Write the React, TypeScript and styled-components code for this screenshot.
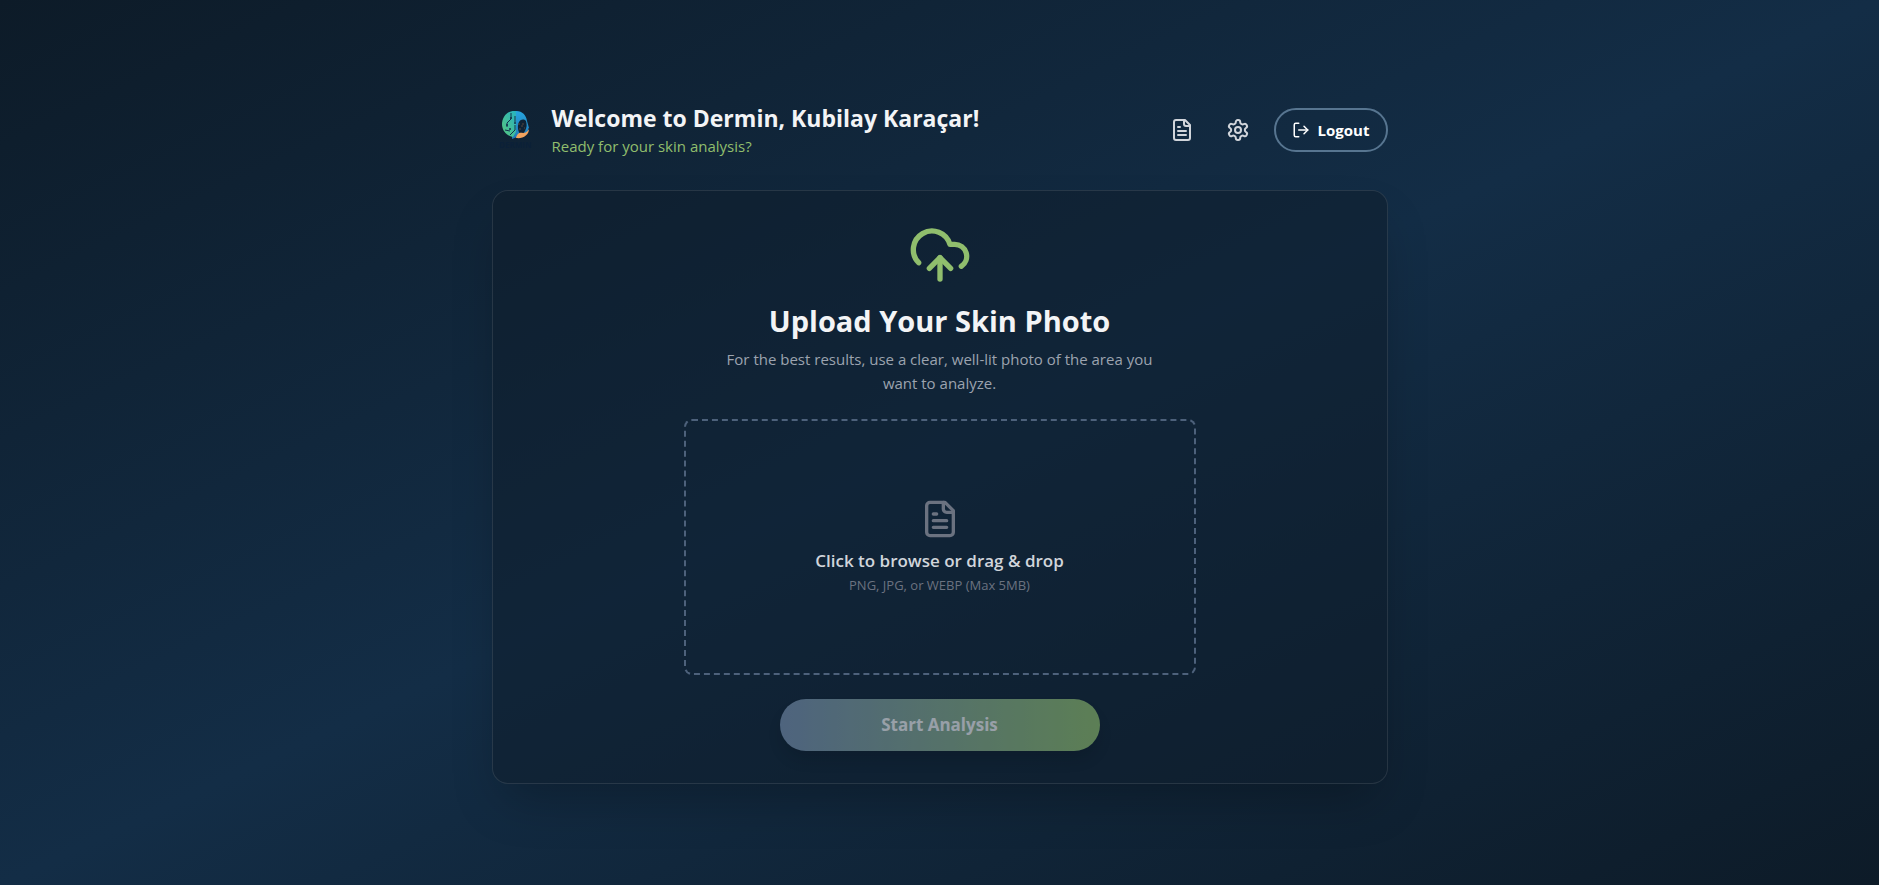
import React from "react";
import styled, { createGlobalStyle } from "styled-components";
import { CloudUpload, LogOut } from "lucide-react";

const GlobalStyle = createGlobalStyle`
  *, *::before, *::after { box-sizing: border-box; }
  body { margin: 0; font-family: "Segoe UI", "Open Sans", "Noto Sans", sans-serif; color: #f3f4f6; background: #0d1b2a; }
  h1, h2, p { margin: 0; }
  button { font: inherit; color: inherit; border: 0; background: none; cursor: pointer; }
`;

const Page = styled.div`
  min-height: 100vh;
  display: flex;
  flex-direction: column;
  align-items: center;
  justify-content: center;
  padding: 24px;
  background: linear-gradient(to bottom right, #0d1b28, #132d46, #0d1b28);
`;

const Shell = styled.div`
  width: 100%;
  max-width: 896px;
  display: flex;
  flex-direction: column;
  gap: 32px;
`;

const Header = styled.header`
  display: flex;
  align-items: center;
  justify-content: space-between;
`;

const Brand = styled.div`
  display: flex;
  align-items: center;
  gap: 12px;
`;

const Logo = styled.svg`
  width: 48px;
  height: 48px;
  flex: none;
`;

const Wordmark = styled.text`
  font: 700 8px "Open Sans", sans-serif;
  fill: #0b2038;
`;

const Greeting = styled.h1`
  font-size: 23px;
  line-height: 32px;
  font-weight: 700;
`;

const Tagline = styled.p`
  font-size: 15px;
  line-height: 24px;
  color: #90be6d;
`;

const Actions = styled.nav`
  display: flex;
  align-items: center;
  gap: 16px;
`;

const IconButton = styled.button`
  display: flex;
  padding: 8px;
  border-radius: 50%;
  color: #d1d5db;
`;

const LogoutButton = styled.button`
  display: flex;
  align-items: center;
  gap: 8px;
  height: 44px;
  padding: 0 16px;
  border: 2px solid #577590;
  border-radius: 22px;
  font-size: 15px;
  font-weight: 700;
  color: #ffffff;
`;

const Card = styled.main`
  display: flex;
  flex-direction: column;
  align-items: center;
  padding: 32px;
  border: 1px solid rgba(255, 255, 255, 0.1);
  border-radius: 16px;
  background: rgba(13, 27, 42, 0.5);
  box-shadow: 0 25px 50px -12px rgba(0, 0, 0, 0.25);
`;

const Title = styled.h2`
  margin-top: 16px;
  font-size: 29px;
  line-height: 36px;
  font-weight: 700;
`;

const Hint = styled.p`
  max-width: 448px;
  margin-top: 8px;
  font-size: 15px;
  line-height: 24px;
  text-align: center;
  color: #9ca3af;
`;

const DropZone = styled.label`
  display: flex;
  flex-direction: column;
  align-items: center;
  justify-content: center;
  width: 100%;
  max-width: 512px;
  height: 256px;
  margin-top: 24px;
  border: 2px dashed #4d617b;
  border-radius: 8px;
  cursor: pointer;
  color: #6b7280;
`;

const FileInput = styled.input`
  position: absolute;
  width: 1px;
  height: 1px;
  opacity: 0;
`;

const DropTitle = styled.span`
  margin-top: 8px;
  font-size: 17px;
  line-height: 28px;
  font-weight: 600;
  color: #d1d5db;
`;

const DropNote = styled.span`
  font-size: 13px;
  line-height: 20px;
`;

const StartButton = styled.button`
  width: 100%;
  max-width: 320px;
  height: 52px;
  margin-top: 24px;
  border-radius: 26px;
  font-size: 17px;
  font-weight: 700;
  color: #f3f4f6;
  background: linear-gradient(to right, #7890b0, #90be6d);
  box-shadow: 0 10px 15px -3px rgba(0, 0, 0, 0.2);
  opacity: 0.6;
`;

const DocumentIcon = ({ size }: { size: number }) => (
  <svg width={size} height={size} viewBox="0 0 24 24" fill="none" stroke="currentColor" strokeWidth="2" strokeLinecap="round" strokeLinejoin="round" aria-hidden="true">
    <path d="M15 2H6a2 2 0 0 0-2 2v16a2 2 0 0 0 2 2h12a2 2 0 0 0 2-2V7z" />
    <path d="M14 2v4a2 2 0 0 0 2 2h4" />
    <path d="M10 9H8M16 13H8M16 17H8" />
  </svg>
);

const GearIcon = () => (
  <svg width="24" height="24" viewBox="0 0 24 24" fill="none" stroke="currentColor" strokeWidth="2" strokeLinecap="round" strokeLinejoin="round" aria-hidden="true">
    <path d="M12.220 2h-.44a2 2 0 0 0-2 2v.18a2 2 0 0 1-1 1.730l-.43.250a2 2 0 0 1-2 0l-.150-.080a2 2 0 0 0-2.730.730l-.220.380a2 2 0 0 0 .730 2.730l.150.100a2 2 0 0 1 1 1.720v.510a2 2 0 0 1-1 1.740l-.150.090a2 2 0 0 0-.730 2.730l.220.380a2 2 0 0 0 2.730.730l.150-.080a2 2 0 0 1 2 0l.430.250a2 2 0 0 1 1 1.730V20a2 2 0 0 0 2 2h.440a2 2 0 0 0 2-2v-.180a2 2 0 0 1 1-1.730l.430-.250a2 2 0 0 1 2 0l.150.080a2 2 0 0 0 2.730-.730l.220-.390a2 2 0 0 0-.730-2.730l-.150-.080a2 2 0 0 1-1-1.740v-.500a2 2 0 0 1 1-1.740l.150-.090a2 2 0 0 0 .730-2.730l-.220-.380a2 2 0 0 0-2.730-.730l-.150.080a2 2 0 0 1-2 0l-.430-.250a2 2 0 0 1-1-1.730V4a2 2 0 0 0-2-2z" />
    <circle cx="12" cy="12" r="3" />
  </svg>
);

const DerminLogo = () => (
  <Logo viewBox="0 0 48 48" role="img" aria-label="Dermin">
    <defs>
      <linearGradient id="face" x1="0" y1="0" x2="0" y2="1">
        <stop offset="0" stopColor="#27a5de" />
        <stop offset="1" stopColor="#1f78b8" />
      </linearGradient>
      <linearGradient id="brain" x1="0" y1="1" x2="1" y2="0">
        <stop offset="0" stopColor="#58c77c" />
        <stop offset="1" stopColor="#27b3c0" />
      </linearGradient>
    </defs>
    <path d="M20 6C28 3 34 8 35 15l2 7-1 1v3c-1 2-3 1-5 2l2-3c2-4 2-6 1-10-2-2-5-2-7 1-2 4-1 9 1 12l-3 3-5 2z" fill="url(#face)" />
    <path d="M26 18h2m1 2h2m-4 3h2m1-5h2m0 4h1" stroke="#56483f" strokeWidth="1" />
    <path d="M24 5C15 4 10 11 10 18c0 7 5 12 11 13l3-5z" fill="url(#brain)" />
    <path d="M19 7v6l-4 4v4M23 10v6M23 19v5l-5 5M13 24l5 1" fill="none" stroke="#12304c" strokeWidth="1" />
    <g fill="#12304c">
      <circle cx="15" cy="19" r="1" />
      <circle cx="19" cy="12" r="1" />
      <circle cx="18" cy="23" r="1" />
      <circle cx="23" cy="17" r="1" />
    </g>
    <path d="M24 32c1-5 4-6 7-5 3 0 5-2 6-4 0 6-6 10-13 9z" fill="#f2a35e" />
    <Wordmark x="7" y="42">DERMIN</Wordmark>
  </Logo>
);

export default function App() {
  return (
    <>
      <GlobalStyle />
      <Page>
        <Shell>
          <Header>
            <Brand>
              <DerminLogo />
              <div>
                <Greeting>Welcome to Dermin, Kubilay Karaçar!</Greeting>
                <Tagline>Ready for your skin analysis?</Tagline>
              </div>
            </Brand>
            <Actions>
              <IconButton type="button" aria-label="Reports"><DocumentIcon size={24} /></IconButton>
              <IconButton type="button" aria-label="Settings"><GearIcon /></IconButton>
              <LogoutButton type="button"><LogOut size={18} />Logout</LogoutButton>
            </Actions>
          </Header>
          <Card>
            <CloudUpload size={64} color="#90be6d" aria-hidden="true" />
            <Title>Upload Your Skin Photo</Title>
            <Hint>For the best results, use a clear, well-lit photo of the area you want to analyze.</Hint>
            <DropZone>
              <FileInput type="file" accept="image/png,image/jpeg,image/webp" />
              <DocumentIcon size={40} />
              <DropTitle>Click to browse or drag &amp; drop</DropTitle>
              <DropNote>PNG, JPG, or WEBP (Max 5MB)</DropNote>
            </DropZone>
            <StartButton type="button" disabled>Start Analysis</StartButton>
          </Card>
        </Shell>
      </Page>
    </>
  );
}
